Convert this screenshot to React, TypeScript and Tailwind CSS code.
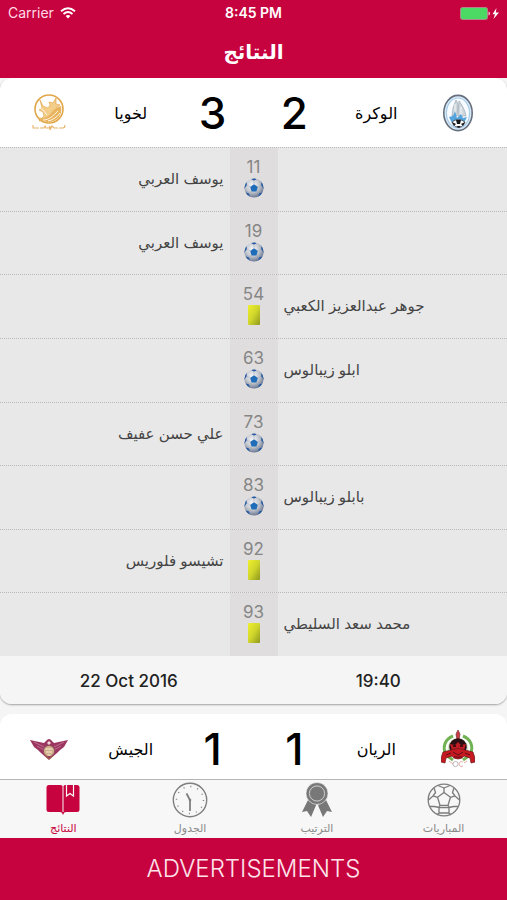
import React, { useId } from 'react';

type EventKind = 'goal' | 'yellow';

interface MatchEvent {
  minute: number;
  kind: EventKind;
  side: 'left' | 'right';
  player: string;
}

interface Team {
  name: string;
  score: number;
  logo: React.ReactNode;
}

const EVENTS: MatchEvent[] = [
  { minute: 11, kind: 'goal', side: 'left', player: 'يوسف العربي' },
  { minute: 19, kind: 'goal', side: 'left', player: 'يوسف العربي' },
  { minute: 54, kind: 'yellow', side: 'right', player: 'جوهر عبدالعزيز الكعبي' },
  { minute: 63, kind: 'goal', side: 'right', player: 'ابلو زيبالوس' },
  { minute: 73, kind: 'goal', side: 'left', player: 'علي حسن عفيف' },
  { minute: 83, kind: 'goal', side: 'right', player: 'بابلو زيبالوس' },
  { minute: 92, kind: 'yellow', side: 'left', player: 'تشيسو فلوريس' },
  { minute: 93, kind: 'yellow', side: 'right', player: 'محمد سعد السليطي' },
];

const LekhwiyaLogo = () => (
  <svg width="34" height="38" viewBox="0 0 34 38" fill="none">
    <circle cx="17" cy="15" r="14" stroke="#e0a648" strokeWidth="1.6" />
    <path d="M8 6l3 6 5 2 2-3-1-3 4 1 3-5v6l4 1-4 3 3 3-5 1-3 5-6 3-6 1 5-5-1-4-4-2 3-2z" fill="#f3cd8a" stroke="#dfa040" strokeWidth="0.6" />
    <path d="M7 23c5 3 10-1 13-5s6-5 9-6c2 9-4 16-12 16-5 0-8-2-10-5z" fill="#e9b45f" />
    <path d="M11 26c6 0 10-4 15-9M16 27c5-1 9-4 12-8M5 12l6 4 4 5" stroke="#fff6e4" strokeWidth="1" />
    <path d="M1 31v3h6M8 34h4l1-2 1 2h3l1-2v4l2-4 2 2h4M27 34h4q2 0 2-3" stroke="#e8b26a" strokeWidth="1.1" />
  </svg>
);

const WakrahLogo = () => (
  <svg width="32" height="38" viewBox="0 0 32 38" fill="none">
    <ellipse cx="16" cy="19" rx="14.2" ry="17.6" fill="#dcebf7" stroke="#65707c" strokeWidth="1.6" />
    <ellipse cx="16" cy="19" rx="11.6" ry="15" fill="#f8fbff" stroke="#a6cdec" strokeWidth="1.2" />
    <path d="M14 6l-3 8-1 8h5l1-12zM17 7l-1 15h8c-1-6-4-11-7-15z" fill="#d0d7dd" stroke="#8f9da9" strokeWidth="0.6" />
    <path d="M13 10v11M19 13v9" stroke="#fff" strokeWidth="0.8" />
    <path d="M7 23l4-1 2-5 2 7 4-4 2 4 4-1-3 6H10z" fill="#56a4dd" />
    <path d="M10 28q6-5 13 0-2 5.500-6.500 5.500T10 28z" fill="#fff" stroke="#38434c" strokeWidth="0.8" />
    <path d="M14 26h5l-1 4h-3zM10 28l4 2-2 2zM23 28l-4 2 2 2zM14 32h5l-2 2z" fill="#16191c" />
  </svg>
);

const JaishLogo = () => (
  <svg width="38" height="22" viewBox="0 0 38 22" fill="none">
    <path d="M0 2l14 3 2-2q3-4 6 0l2 2 14-3-4 7-4 3-3 3-8 7-8-7-3-3-4-3z" fill="#9c3560" />
    <path d="M4 4l10 5M7 8l7 4M34 4l-10 5M31 8l-7 4" stroke="#cf86a4" strokeWidth="0.7" />
    <circle cx="19" cy="13" r="5.6" fill="#cfae8a" stroke="#8a4a60" strokeWidth="0.9" />
    <path d="M15.500 11h7M16 14h6M17.500 17h3" stroke="#f5e8d2" strokeWidth="1.2" />
    <path d="M17 5l2-2 2 2-2 2z" fill="#f0d6da" />
    <path d="M15 18l4 3 4-3" stroke="#9e6f3d" />
  </svg>
);

const RayyanLogo = () => (
  <svg width="34" height="38" viewBox="0 0 34 38" fill="none">
    <path d="M12 6C4 9 1 17 5 25l7 5M22 6c8 3 11 11 7 19l-7 5" stroke="#71b254" strokeWidth="3" />
    <path d="M14 9C8 11 6 17 8 24M20 9c6 2 8 8 6 15" stroke="#c8e4b8" strokeWidth="1" />
    <path d="M17 0l2 4-1 6h-2l-1-6z" fill="#ca3b43" stroke="#713537" strokeWidth="0.7" />
    <circle cx="17" cy="17" r="8.8" fill="#2a1012" />
    <path d="M9 14l5 1 3-3 3 3 5-1-2 6H11z" fill="#bf1b25" />
    <path d="M10 20q7-3 14 0l8 2q2 4 2 10l-4 1-1-5-6-2q-2 3-6 3t-6-3l-6 2-1 5-4-1q0-6 2-10z" fill="#c71922" stroke="#69171a" strokeWidth="0.7" />
    <path d="M5 25l5-2M29 25l-5-2M12 22l5 3 5-3M13 27h8" stroke="#5d1114" />
    <path d="M12 16h3M19 16h3" stroke="#1c0809" strokeWidth="1.4" />
    <circle cx="14.500" cy="34" r="2.6" stroke="#aaa" strokeWidth="0.8" />
    <path d="M22 32a2.500 2.500 0 1 0 0 4M8 31l4 3M26 31l-3 2" stroke="#e0a0a0" strokeWidth="0.9" />
  </svg>
);

const GoalIcon = () => {
  const id = useId();

  return (
    <svg width="20" height="20" viewBox="0 0 20 20" role="img" aria-label="هدف">
      <defs>
        <radialGradient id={`${id}-fill`} cx="0.42" cy="0.35" r="0.65">
          <stop offset="0" stopColor="#f6f7f9" />
          <stop offset="0.55" stopColor="#c3c7ce" />
          <stop offset="1" stopColor="#6d7a94" />
        </radialGradient>
        <clipPath id={`${id}-edge`}>
          <circle cx="10" cy="10" r="9.6" />
        </clipPath>
      </defs>
      <circle cx="10" cy="10" r="9.6" fill={`url(#${id}-fill)`} />
      <g clipPath={`url(#${id}-edge)`}>
        <path d="M10 6.300l3.800 2.700-1.400 4.400H7.600L6.200 9z" fill="#1f6cb8" />
        <path d="M7 0h6l-1 1.800-2 .8-2-.8zM0 5l2.600-.8.200 3L0 11zM20 5l-2.600-.8-.2 3L20 11zM2 14.500l3 1 1 3.500-3 1zM18 14.500l-3 1-1 3.500 3 1z" fill="#2459a3" />
        <path d="M10 2.600v3.700M13.800 9L17 7.200M6.200 9L3 7.200M7.600 13.400L5 15.500M12.400 13.400l2.600 2.100" stroke="#a3a9b5" strokeWidth="0.5" />
      </g>
    </svg>
  );
};

const YellowCard = () => (
  <span role="img" aria-label="بطاقة صفراء" className="h-5 w-3 rounded-[1px] bg-linear-to-br from-[#f0f02c] via-[#cfd52b] to-[#8f981d]" />
);

const BookIcon = () => (
  <svg width="34" height="32" viewBox="0 0 34 32" fill="none">
    <path d="M3 1h11q2 0 2.500 1v27q-1-1-3-1H3Q.500 28 .500 25.500v-22Q.500 1 3 1zM17.500 2q.500-1 2-1H31q2.500 0 2.500 2.500v22Q33.500 28 31 28H20.500q-2 0-3 1z" fill="#c7033f" />
    <path d="M15.500 28h3L17 31z" fill="#c7033f" />
    <path d="M20.500 1v11l3.500-2.500 3.500 2.500V1" stroke="#f7f7f7" strokeWidth="1.200" />
  </svg>
);

const ClockIcon = () => (
  <svg width="36" height="36" viewBox="0 0 36 36" fill="none" stroke="#7f7f7f">
    <circle cx="18" cy="18" r="16.700" strokeWidth="1.400" />
    <circle cx="18" cy="18" r="13.500" strokeWidth="1.400" strokeDasharray="1 6.069" />
    <path d="M14.500 11.500L18 18v11" strokeWidth="1.800" />
    <circle cx="18" cy="18" r="1.300" fill="#7f7f7f" stroke="none" />
  </svg>
);

const MedalIcon = () => (
  <svg width="30" height="36" viewBox="0 0 30 36" fill="none">
    <path d="M6 18L0 30l5-1 4 6 6-14zM24 18l6 12-5-1-4 6-6-14z" fill="#787878" />
    <path d="M17 21l-4 8" stroke="#f7f7f7" />
    <circle cx="15" cy="11.500" r="11" fill="#787878" stroke="#f7f7f7" strokeWidth="0.6" />
    <circle cx="15" cy="11.500" r="7.600" stroke="#cfcfcf" strokeWidth="1" />
  </svg>
);

const BallIcon = () => (
  <svg width="34" height="34" viewBox="0 0 34 34" fill="none" stroke="#7c7c7c" strokeWidth="1.300" strokeLinejoin="round">
    <circle cx="17" cy="17" r="15.800" />
    <path d="M17 9.500l6.500 4.800-2.500 8h-8l-2.500-8z" />
    <path d="M17 9.500V5M23.500 14.300l4.500-1.500M21 22.300l1 2M13 22.300l-1 2M10.500 14.300L6 12.800" />
    <path d="M11 2.500L17 5l6-2.500M27 5l-1.500 4.500L28 13l4.500 4M31 23.500l-4.500 0-4.500 1v5.500l2 2M10 32l2-2v-5.500l-4.500-1H3M1.500 17L6 13l2.500-3.500L7 5M12 24.500h10M12 30h10" />
  </svg>
);

const TABS = [
  { label: 'النتائج', icon: <BookIcon />, active: true },
  { label: 'الجدول', icon: <ClockIcon />, active: false },
  { label: 'الترتيب', icon: <MedalIcon />, active: false },
  { label: 'المباريات', icon: <BallIcon />, active: false },
];

const MatchHeader: React.FC<{ left: Team; right: Team }> = ({ left, right }) => (
  <div className="grid h-[69px] grid-cols-6 items-center justify-items-center px-2">
    {left.logo}
    <h2 className="text-base whitespace-nowrap">{left.name}</h2>
    <span className="text-[44px] leading-none font-medium">{left.score}</span>
    <span className="text-[44px] leading-none font-medium">{right.score}</span>
    <h2 className="text-base whitespace-nowrap">{right.name}</h2>
    {right.logo}
  </div>
);

const EventRow: React.FC<{ event: MatchEvent }> = ({ event }) => (
  <li className="grid grid-cols-[1fr_48px_1fr] border-t border-dotted border-[#b9b9b9]">
    <span dir="rtl" className="self-center px-1.5 text-right">
      {event.side === 'left' && event.player}
    </span>
    <div className="flex flex-col items-center bg-[#dfdddd] pt-2">
      <span className="text-[17px] leading-[22px] text-[#868686]">{event.minute}</span>
      {event.kind === 'goal' ? <GoalIcon /> : <YellowCard />}
    </div>
    <span dir="rtl" className="self-center px-1.5 text-left">
      {event.side === 'right' && event.player}
    </span>
  </li>
);

export default function App() {
  return (
    <div className="flex h-screen flex-col overflow-hidden bg-[#f5f5f5] font-['Inter','DejaVu_Sans',sans-serif] text-black">
      <header className="bg-[#c7033f] text-white">
        <div className="grid h-[26px] grid-cols-3 items-center px-2 text-sm">
          <div className="flex items-center gap-1.5 text-[#ffdbe5]">
            <span>Carrier</span>
            <svg width="16" height="12" viewBox="0 0 16 12" fill="none" stroke="#fff" strokeWidth="1.900">
              <path d="M1 4.300q7-6 14 0M3.500 7q4.500-3.800 9 0" />
              <path d="M5.600 9q2.400-2 4.800 0L8 11.500z" fill="#fff" stroke="none" />
            </svg>
          </div>
          <span className="text-center font-semibold whitespace-nowrap">8:45 PM</span>
          <svg className="justify-self-end" width="41" height="13" viewBox="0 0 41 13">
            <rect x="2.500" y="0.500" width="27" height="12" rx="2" fill="#4cd964" stroke="#b5838a" />
            <path d="M30.500 4.500q1.500 0 1.500 2t-1.500 2z" fill="#f3c5d2" />
            <path d="M38.500 1L34.500 7.200H37L35.500 12 41 5.500h-3.200z" fill="#fff" />
          </svg>
        </div>
        <h1 className="h-[52px] text-center text-xl leading-[52px] font-bold">النتائج</h1>
      </header>

      <main className="flex min-h-0 flex-1 flex-col gap-2.5 overflow-hidden">
        <section className="shrink-0 overflow-hidden rounded-xl bg-white shadow-[0_1px_2px_rgba(0,0,0,0.35)]">
          <MatchHeader
            left={{ name: 'لخويا', score: 3, logo: <LekhwiyaLogo /> }}
            right={{ name: 'الوكرة', score: 2, logo: <WakrahLogo /> }}
          />
          <ul className="grid h-[509px] auto-rows-fr bg-[#e8e8e8] text-[15px] text-[#444]">
            {EVENTS.map((event) => (
              <EventRow key={event.minute} event={event} />
            ))}
          </ul>
          <div className="grid h-12 grid-cols-2 items-center bg-[#f5f5f5] px-1 pt-1 text-center text-[17px] font-medium text-[#222]">
            <span>22 Oct 2016</span>
            <span>19:40</span>
          </div>
        </section>

        <section className="shrink-0 rounded-t-xl bg-white">
          <MatchHeader
            left={{ name: 'الجيش', score: 1, logo: <JaishLogo /> }}
            right={{ name: 'الريان', score: 1, logo: <RayyanLogo /> }}
          />
        </section>
      </main>

      <nav className="grid h-[59px] grid-cols-4 border-t border-[#b5b5b5] bg-[#f7f7f7]">
        {TABS.map((tab) => (
          <button
            key={tab.label}
            type="button"
            className={`flex flex-col items-center text-[11px] leading-4 ${tab.active ? 'text-[#c7033f]' : 'text-[#8a8a8a]'}`}
          >
            <span className="flex h-10 items-center">{tab.icon}</span>
            {tab.label}
          </button>
        ))}
      </nav>

      <footer className="flex h-[62px] items-center justify-center bg-[#c7033f] text-2xl font-light text-[#ffe3eb]">
        ADVERTISEMENTS
      </footer>
    </div>
  );
}
